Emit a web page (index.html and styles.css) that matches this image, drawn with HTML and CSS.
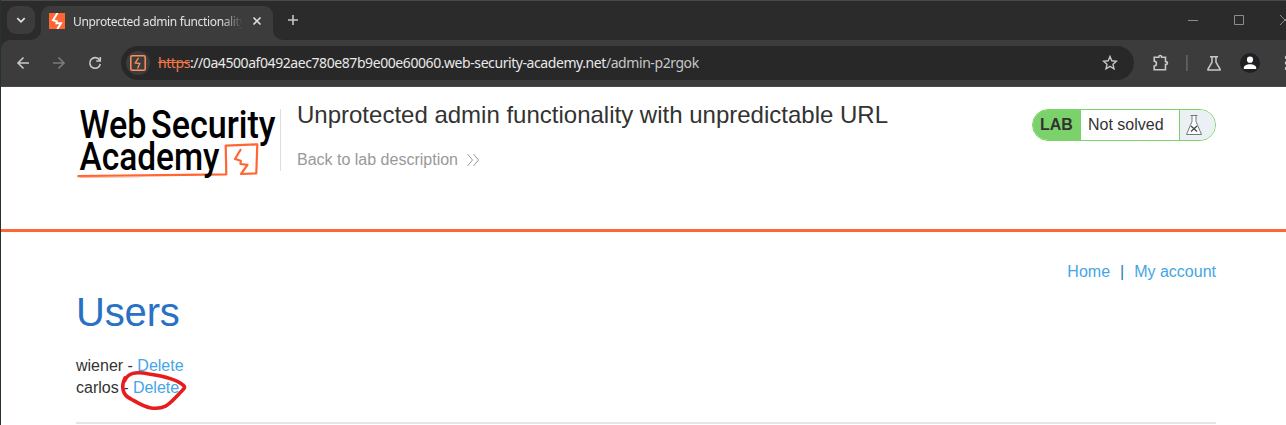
FILE: index.html
```html
<!DOCTYPE html>
<html lang="en">
<head>
<meta charset="utf-8">
<title>Unprotected admin functionality with unpredictable URL</title>
<link rel="stylesheet" href="styles.css">
</head>
<body>
<div class="browser">
  <div class="tabstrip">
    <div class="tab-search"><svg width="28" height="28" viewBox="0 0 28 28"><path d="M10.300 12.200l3.700 3.600 3.700-3.600" fill="none" stroke="#dedede" stroke-width="1.800"/></svg></div>
    <div class="tab">
      <svg class="favicon" width="16" height="16" viewBox="0 0 16 16"><path d="M0 0h16v16H0z" fill="#ff6633"/><path d="M8.500 0L4 7.200l3.800 1-.3 2H12L8.300 16" fill="none" stroke="#fff" stroke-width="2"/></svg>
      <span class="tab-title">Unprotected admin functionality</span>
      <svg class="tab-close" width="10" height="10" viewBox="0 0 10 10"><path d="M1.500 1.500l7 7m0-7l-7 7" stroke="#dedede" stroke-width="1.600"/></svg>
      <svg class="tab-foot" width="10" height="10" viewBox="0 0 10 10"><path d="M0 0a10 10 0 0 0 10 10H0z" fill="#3c3c3c"/></svg>
      <svg class="tab-foot-left" width="10" height="10" viewBox="0 0 10 10"><path d="M10 0A10 10 0 0 1 0 10h10z" fill="#3c3c3c"/></svg>
    </div>
    <svg class="new-tab" width="12" height="12" viewBox="0 0 12 12"><path d="M6 1v10M1 6h10" stroke="#c7c7c7" stroke-width="1.600"/></svg>
    <svg class="window-controls" width="98" height="14" viewBox="0 0 98 14"><g fill="none" stroke="#8c8c8c"><path d="M0 7.500h10M46.500 2.500h9v9h-9zM92 2l10 10m0-10L92 12"/></g></svg>
  </div>
  <div class="toolbar">
    <svg class="nav-icons" width="90" height="20" viewBox="0 0 90 20"><g fill="none" stroke-width="1.600"><path d="M14 10H3m5.500-5.500L3 10l5.500 5.500" stroke="#c7c7c7"/><path d="M38 10h11m-5.500-5.500L49 10l-5.500 5.500" stroke="#7b7b7b"/><path d="M84.500 7A5.300 5.300 0 1 0 85.300 11M85.300 4v4h-4.100" stroke="#c7c7c7"/></g></svg>
    <div class="address">
      <span class="site-icon"><svg width="16" height="16" viewBox="0 0 16 16"><rect x=".8" y=".8" width="14.400" height="14.400" rx="1.500" fill="none" stroke="#ff8f5e" stroke-width="1.500"/><path d="M8.500 2.800L5.300 8l4.500.5L7.500 13.500" fill="none" stroke="#ff8f5e" stroke-width="1.300"/></svg></span>
      <span class="url"><s>https</s><span class="host">://0a4500af0492aec780e87b9e00e60060.web-security-academy.net</span><span class="path">/admin-p2rgok</span></span>
      <svg class="star" width="16" height="16" viewBox="0 0 16 16"><path d="M8 1.500l1.800 4.300 4.700.4-3.500 3.100 1 4.500L8 11.400l-4 2.400 1-4.500L1.500 6.200l4.700-.4z" fill="none" stroke="#c7c7c7" stroke-width="1.400"/></svg>
    </div>
    <svg class="actions" width="134" height="22" viewBox="0 0 134 22">
      <path d="M2.700 5.200h4.100c0-2.200 2.800-2.200 2.800 0h3.900v4.400c2.500 0 2.500 3 0 3v5.200H2.200v-3.700c3-.1 3-4.900 0-5V5.200z" fill="none" stroke="#c7c7c7" stroke-width="1.600"/>
      <path d="M34 3h1.700v16H34z" fill="#626262"/>
      <path d="M58 4.800h8M60 4.800v5.400L56 17v1h12v-1l-4-6.800V4.800" fill="none" stroke="#c7c7c7" stroke-width="1.500"/>
      <circle cx="98" cy="11" r="10" fill="#202124"/><circle cx="98" cy="7.700" r="3.100" fill="#fff"/><path d="M91.800 17v-1.300c0-4.700 12.400-4.700 12.400 0V17z" fill="#fff"/>
      <g fill="#c7c7c7"><circle cx="134.500" cy="5.500" r="1.700"/><circle cx="134.500" cy="11" r="1.700"/><circle cx="134.500" cy="16.500" r="1.700"/></g>
    </svg>
  </div>
</div>
<header class="lab-header">
  <svg class="logo" width="204" height="76" viewBox="0 0 204 76">
    <path d="M1.500 68.200L150.300 66.300l-.6-28.600 31.600-1.400-1 29-15.300.7 6.500-9.200-7-.8.300-3.200-5.800-1.800 6-10" fill="none" stroke="#ff6633" stroke-width="2.200" stroke-linejoin="round"/>
    <path d="M4 69.400l60-.6" stroke="#ffad90" stroke-width="1"/>
    <g class="logo-text"><text x="3.500" y="29.500" textLength="67" lengthAdjust="spacingAndGlyphs">Web</text><text x="75" y="29.500" textLength="124.500" lengthAdjust="spacingAndGlyphs">Security</text><text x="3.500" y="61.800" textLength="140" lengthAdjust="spacingAndGlyphs">Academy</text></g>
  </svg>
  <div class="heading">
    <h2>Unprotected admin functionality with unpredictable URL</h2>
    <a class="back">Back to lab description <svg width="14" height="14" viewBox="0 0 14 14"><path d="M1.500 1l5 6-5 6M7.500 1l5 6-5 6" fill="none" stroke="#9a9a9a"/></svg></a>
  </div>
  <div class="status">
    <b>LAB</b><span>Not solved</span>
    <i><svg width="18" height="22" viewBox="0 0 18 22"><path d="M5.500 1.500h7M7 1.500v6L1.500 20.500h15L11 7.500v-6" fill="#fff" stroke="#73787a"/><path d="M6 12l6 5.500m0-5.500l-6 5.500" stroke="#444" stroke-width="1.300"/></svg></i>
  </div>
</header>
<main class="content">
  <nav class="links"><a>Home</a><span>|</span><a>My account</a></nav>
  <h1>Users</h1>
  <div class="users">
    <div>wiener - <a>Delete</a></div>
    <div>carlos - <a>Delete</a><svg class="mark" width="72" height="46" viewBox="0 0 72 46"><path d="M5.500 12C9 4 16 2 30 5c14 2 27 5 34 11 4 3-1 5-4 9C51 34 47 41 32 39c-7-1-13-5-20-9C3 26 2 17 6 9" fill="none" stroke="#e81c1c" stroke-width="3.600" stroke-linecap="round"/></svg></div>
  </div>
  <hr>
</main>
</body>
</html>
```
FILE: styles.css
```css
* { box-sizing: border-box; }
body { margin: 0; height: 425px; overflow: hidden; background: #fff; border-left: 1px solid #263329; font-family: "Liberation Sans", Arial, sans-serif; font-size: 16px; color: #333332; }
svg { display: block; flex: none; }
.browser { height: 87px; background: #2b2b2b; border-top: 1px solid #484848; font-family: "Noto Sans", "Open Sans", sans-serif; }
.tabstrip { display: flex; height: 39px; padding: 5px 0 0 6px; }
.tab-search { width: 28px; height: 28px; border-radius: 9px; background: #3c3c3c; }
.tab { position: relative; display: flex; align-items: center; width: 232px; height: 34px; margin-left: 6px; padding: 0 11px 4px 8px; border-radius: 9px 9px 0 0; background: #3c3c3c; }
.tab-title { width: 169px; margin: 0 10px 0 8px; overflow: hidden; white-space: nowrap; font-size: 12px; letter-spacing: -.35px; color: #e3e3e3; mask-image: linear-gradient(90deg, #000 148px, transparent 170px); }
.tab-foot { position: absolute; left: 232px; bottom: 0; }
.tab-foot-left { position: absolute; right: 232px; bottom: 0; }
.new-tab { margin: 8px 0 0 14px; }
.window-controls { margin: 7px 0 0 auto; }
.toolbar { display: flex; align-items: center; height: 47px; padding: 0 0 1px 14px; border-radius: 9px 0 0; border-bottom: 1px solid #4a4a4a; background: #3c3c3c; }
.address { display: flex; align-items: center; width: 1013px; height: 34px; margin-left: 16px; padding: 0 16px 0 5px; border-radius: 17px; background: #282828; }
.site-icon { display: grid; place-items: center; width: 24px; height: 24px; border-radius: 50%; background: #3c3c3c; }
.url { flex: 1; margin-left: 8px; white-space: nowrap; font-size: 14px; letter-spacing: -.425px; color: #e8e8e8; }
.url s { color: #f07848; }
.path { color: #c7c7c7; }
.actions { margin-left: 18px; }
.lab-header { display: flex; align-items: flex-start; height: 145px; padding: 22px 70px 0 75px; border-bottom: 3px solid #ff6633; }
.logo { margin-top: -1px; }
.logo-text { font: 500 38px Roboto, sans-serif; fill: #000; }
.heading { height: 62px; padding-left: 16px; border-left: 1px solid #dedede; }
h2 { margin: -8px 0 0; font-size: 24px; line-height: 28px; font-weight: 400; }
.back { display: flex; align-items: center; gap: 8px; margin-top: 21px; line-height: 20px; color: #999; }
.status { display: flex; width: 184px; height: 32px; margin-left: auto; overflow: hidden; border: 1px solid #7bd26b; border-radius: 16px; line-height: 30px; }
.status b { width: 48px; padding-left: 7px; background: #7bd26b; }
.status span { width: 99px; padding-left: 7px; border-right: 1px solid #7bd26b; }
.status i { flex: 1; padding: 4px 0 0 5px; background: #eaf0f3; }
.content { padding: 30px 70px 0 75px; }
.links { display: flex; justify-content: flex-end; gap: 10px; line-height: 20px; color: #1d7dba; }
a { color: #45a5e5; }
.lab-header .back { color: #999; }
h1 { margin: 7px 0 0; font-size: 40px; line-height: 46px; font-weight: 400; letter-spacing: -.15px; color: #2871c4; }
.users { margin-top: 20px; line-height: 22px; }
.users div { position: relative; }
.mark { position: absolute; left: 43px; top: -8px; }
hr { height: 2px; margin: 23px 0 0; border: 0; background: #e5e5e5; }
```
